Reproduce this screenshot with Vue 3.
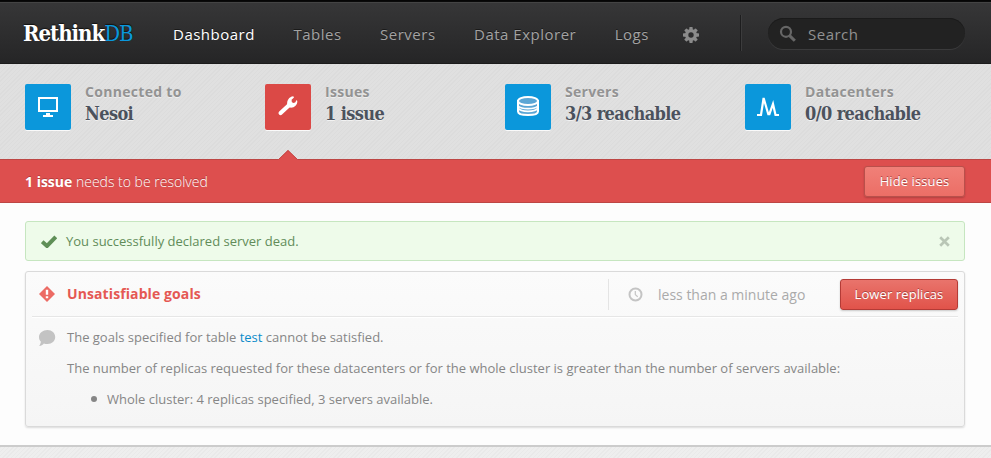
<script setup>
const links = ['Dashboard', 'Tables', 'Servers', 'Data Explorer', 'Logs']
const stats = [
  { icon: 'monitor', label: 'Connected to', value: 'Nesoi' },
  { icon: 'wrench', label: 'Issues', value: '1 issue', alert: true },
  { icon: 'database', label: 'Servers', value: '3/3 reachable' },
  { icon: 'peaks', label: 'Datacenters', value: '0/0 reachable' },
]
</script>

<template>
  <div class="page">
    <header class="navbar">
      <div class="brand"><span>Rethink</span><span class="db">DB</span></div>
      <nav class="links">
        <a v-for="(l, i) in links" :key="l" :class="{ active: i === 0 }">{{ l }}</a>
      </nav>
      <svg class="gear" width="16" height="16" viewBox="0 0 16 16">
        <g fill="#8b8b8b">
          <rect v-for="a in [0, 45, 90, 135]" :key="a" x="6.3" y="0" width="3.4" height="16" rx=".7" :transform="`rotate(${a} 8 8)`" />
          <circle cx="8" cy="8" r="6" />
        </g>
        <circle cx="8" cy="8" r="2.7" fill="#2d2d2e" />
      </svg>
      <i class="divider"></i>
      <div class="search">
        <svg width="18" height="18" viewBox="0 0 18 18" fill="none" stroke="#666">
          <circle cx="7" cy="6.8" r="5" stroke-width="2.2" />
          <path d="M10.6 10.6 15.8 15.8" stroke-width="3" />
        </svg>
        <span>Search</span>
      </div>
    </header>

    <section class="stats">
      <div v-for="s in stats" :key="s.label" class="stat" :class="{ alert: s.alert }">
        <div class="tile">
          <svg v-if="s.icon === 'monitor'" width="46" height="46" viewBox="0 0 46 46" fill="#fff">
            <path fill-rule="evenodd" d="M13 13h20v15H13zM15 15v11h16V15zM21 29h4v2h3v2H18v-2h3z" />
          </svg>
          <svg v-else-if="s.icon === 'wrench'" width="46" height="46" viewBox="0 0 46 46">
            <path d="M15.6 29 24.5 20.8" stroke="#fff" stroke-width="4.2" stroke-linecap="round" />
            <path d="M22.3 21.2C21.5 16.5 24 12.8 28.3 12.3L29 13.5 26.6 15.7 26.8 18 28.2 19 30.2 18.6 31.6 16 32.3 17C32.5 21.4 29 24.2 24.8 23.6Z" fill="#fff" />
          </svg>
          <svg v-else-if="s.icon === 'database'" width="46" height="46" viewBox="0 0 46 46" fill="none" stroke="#fff" stroke-width="2">
            <path d="M13 17v10.5C13 29.8 17.4 31 23 31s10-1.2 10-3.5V17z" fill="#5ba6d5" />
            <path d="M13 22c2 2 6 2.6 10 2.6S31 24 33 22M13 24c2 3 6 3.4 10 3.4S31 27 33 24" stroke-width="1.6" />
            <ellipse cx="23" cy="17" rx="10" ry="4" fill="#5ba6d5" />
          </svg>
          <svg v-else width="46" height="46" viewBox="0 0 46 46" fill="none" stroke="#fff" stroke-width="2.2" stroke-linejoin="miter">
            <path d="M12 31h4L18.6 14 23.3 30.2H24.4L28 20 30.5 31H34" />
          </svg>
        </div>
        <div class="text">
          <div class="label">{{ s.label }}</div>
          <div class="value">{{ s.value }}</div>
        </div>
      </div>
    </section>

    <section class="banner">
      <svg class="notch" width="20" height="10" viewBox="0 0 20 10">
        <path d="M0 10 10 0 20 10z" fill="#dd4f4e" />
        <path d="M.5 9.5 10 .5 19.5 9.5" fill="none" stroke="#c14644" />
      </svg>
      <p><b>1 issue</b> <span>needs to be resolved</span></p>
      <button class="btn hide">Hide issues</button>
    </section>

    <main class="content">
      <div class="success">
        <svg class="check" width="16" height="13" viewBox="0 0 16 13"><path d="M1.2 6.7 6 11 14.8 1.8" fill="none" stroke="#5f8f57" stroke-width="4" /></svg>
        <span>You successfully declared server dead.</span>
        <svg class="close" width="11" height="11" viewBox="0 0 11 11"><path d="M1.2 1.2 9.8 9.8M9.8 1.2 1.2 9.8" stroke="#b9c6b6" stroke-width="2.7" /></svg>
      </div>

      <article class="issue">
        <div class="head">
          <svg class="warn" width="16" height="16" viewBox="0 0 16 16">
            <path d="M8 0 16 8 8 16 0 8z" fill="#ec6b64" />
            <path d="M6.8 3.8h2.4v5H6.8zM6.8 10.2h2.4v2H6.8z" fill="#fff" />
          </svg>
          <h2>Unsatisfiable goals</h2>
          <div class="time">
            <svg width="15" height="15" viewBox="0 0 15 15" fill="none" stroke="#c4c4c4">
              <circle cx="7.5" cy="7.5" r="6" stroke-width="2" />
              <path d="M7.3 4v3.6L9.7 9.7" stroke-width="1.2" />
            </svg>
            <span>less than a minute ago</span>
          </div>
          <button class="btn lower">Lower replicas</button>
        </div>
        <div class="body">
          <svg class="bubble" width="17" height="17" viewBox="0 0 17 17"><path d="M8.5 0C13 0 16.2 3 16.2 7S13 14 8.5 14C7 14 5.8 13.9 4.9 13.4 3.7 15 2.2 15.8.2 16 1 14.8 1.7 13.3 1.9 11.8.7 10.6 0 9 0 7 0 3 4 0 8.5 0z" fill="#c3c3c3" /></svg>
          <div class="copy">
            <p>The goals specified for table <a>test</a> cannot be satisfied.</p>
            <p>The number of replicas requested for these datacenters or for the whole cluster is greater than the number of servers available:</p>
            <ul><li>Whole cluster: 4 replicas specified, 3 servers available.</li></ul>
          </div>
        </div>
      </article>
    </main>
    <footer class="foot"></footer>
  </div>
</template>

<style>
body { margin: 0; overflow: hidden; }
</style>

<style scoped>
.page { width: 991px; height: 458px; display: flex; flex-direction: column; overflow: hidden; background: #fdfdfd; font-family: "Open Sans", sans-serif; font-size: 13px; color: #868686; }
.page * { box-sizing: border-box; }
p, h2, ul { margin: 0; padding: 0; }
svg { display: block; flex: none; }
.navbar { height: 64px; flex: none; display: flex; align-items: flex-start; padding-left: 23px; background: linear-gradient(#373738, #252526); border-top: 1px solid #050505; box-shadow: inset 0 1px #0a0a0a, inset 0 2px #444, inset 0 -1px #1c1c1c; }
.brand { width: 150px; padding-top: 17px; font: bold 22px/30px "DejaVu Serif Condensed", "DejaVu Serif", serif; letter-spacing: -1px; color: #fff; text-shadow: 0 -1px 1px #111; white-space: nowrap; }
.db { color: #0b97db; font-weight: normal; }
.links { display: flex; gap: 38.5px; width: 510px; padding-top: 22px; font-size: 15px; line-height: 22px; letter-spacing: .5px; color: #a2a2a2; text-shadow: 0 -1px #1a1a1a; white-space: nowrap; }
.active { color: #fff; }
.gear { margin-top: 26px; }
.divider { width: 2px; height: 36px; margin: 14px 26px 0 41px; background: linear-gradient(90deg, #1d1d1e 50%, #3c3c3d 50%); }
.search { width: 197px; height: 31px; margin-top: 17px; padding-left: 11px; display: flex; align-items: center; gap: 11px; border-radius: 16px; background: #222; box-shadow: inset 0 1px #1b1b1b, 0 1px #3b3b3c; color: #919191; font-size: 15px; letter-spacing: .5px; }
.stats { height: 95px; flex: none; display: flex; padding: 20px 0 0 25px; background: repeating-linear-gradient(135deg, #dcdcdc 0 1px, #e0e0e0 1px 3px); }
.stat { width: 240px; display: flex; gap: 14px; }
.tile { width: 46px; height: 46px; border-radius: 2px; background: #0b97db; box-shadow: 0 1px #fafafa; }
.alert .tile { background: #db4946; }
.label { margin-top: -2px; font-weight: bold; font-size: 14px; line-height: 20px; letter-spacing: .3px; color: #939393; text-shadow: 0 1px #eee; }
.value { font: bold 18px/24px "DejaVu Serif Condensed", "DejaVu Serif", serif; letter-spacing: -.6px; color: #4b525d; text-shadow: 0 1px #f2f2f2; white-space: nowrap; }
.banner { position: relative; height: 44px; flex: none; display: flex; align-items: center; justify-content: space-between; padding: 0 26px 0 25px; background: #dd4f4e; border: solid #bd4644; border-width: 1px 0; color: #fff; font-size: 14px; text-shadow: 0 -1px #b43d3c; }
.banner span { font-weight: 300; }
.notch { position: absolute; left: 278px; top: -10px; }
.btn { height: 31px; padding: 0; border-radius: 3px; color: #fff; font: 13px "Open Sans", sans-serif; letter-spacing: .1px; text-shadow: 0 -1px #a64441; box-shadow: 0 1px 2px #0003; }
.hide { width: 101px; border: 1px solid #b9504b; background: linear-gradient(#f08078, #ec6e66); }
.lower { width: 118px; border: 1px solid #b43b36; background: linear-gradient(#e9746c, #e1534a); }
.content { height: 242px; flex: none; padding: 18px 26px 0 25px; display: flex; flex-direction: column; gap: 10px; }
.success { height: 40px; display: flex; align-items: center; padding: 0 14px 0 15px; border: 1px solid #c6e6c0; border-radius: 3px; background: #eefbea; color: #618c59; }
.success span { margin-left: 9px; }
.close { margin-left: auto; }
.issue { height: 156px; padding: 0 6px; border: 1px solid #dadada; border-radius: 3px; background: linear-gradient(#fbfbfb, #f5f5f5); box-shadow: 0 1px 2px #0002; }
.head { height: 45px; display: flex; align-items: center; padding-left: 7px; border-bottom: 1px solid #e6e6e6; box-shadow: 0 1px #fff; }
.head h2 { margin-left: 12px; font-size: 14px; line-height: 20px; letter-spacing: .1px; color: #e55853; }
.time { width: 232px; height: 31px; display: flex; align-items: center; gap: 15px; margin-left: auto; padding-left: 19px; border-left: 1px solid #e4e4e4; font-size: 14px; color: #aaa; }
.body { display: flex; gap: 11px; padding: 11px 0 0 7px; }
.bubble { margin-top: 2px; }
.copy { line-height: 18px; white-space: nowrap; }
.copy p { margin-bottom: 13px; }
.copy a { color: #0b8bca; }
ul { list-style: none; padding-left: 24px; }
li { display: flex; align-items: center; }
li::before { content: ""; width: 6px; height: 6px; margin-right: 10px; border-radius: 50%; background: #868686; }
.foot { flex: 1; border-top: 2px solid #ccc; background: repeating-linear-gradient(135deg, #e9e9e9 0 1px, #eee 1px 3px); }
</style>
